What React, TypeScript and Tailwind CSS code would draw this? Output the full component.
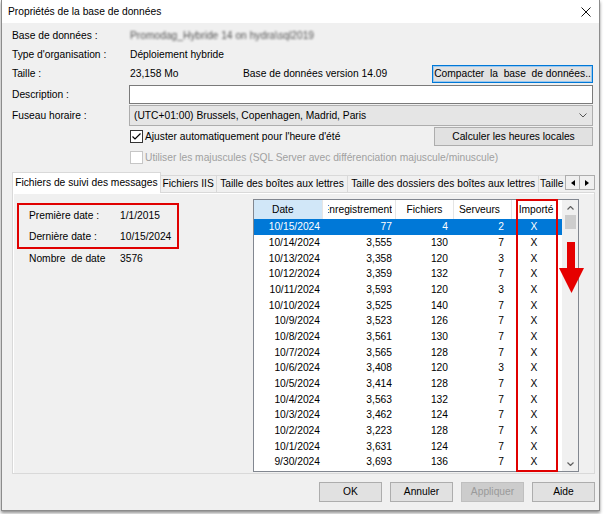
import React from "react";

const rows = [
  ["10/15/2024", "77", "4", "2"],
  ["10/14/2024", "3,555", "130", "7"],
  ["10/13/2024", "3,358", "120", "3"],
  ["10/12/2024", "3,359", "132", "7"],
  ["10/11/2024", "3,593", "120", "3"],
  ["10/10/2024", "3,525", "140", "7"],
  ["10/9/2024", "3,523", "126", "7"],
  ["10/8/2024", "3,561", "130", "7"],
  ["10/7/2024", "3,565", "128", "7"],
  ["10/6/2024", "3,408", "120", "3"],
  ["10/5/2024", "3,414", "128", "7"],
  ["10/4/2024", "3,563", "132", "7"],
  ["10/3/2024", "3,462", "124", "7"],
  ["10/2/2024", "3,223", "128", "7"],
  ["10/1/2024", "3,631", "124", "7"],
  ["9/30/2024", "3,693", "136", "7"],
];

const tabs = [
  { label: "Fichiers IIS", w: "w-[56px]" },
  { label: "Taille des boîtes aux lettres", w: "w-[132px]" },
  { label: "Taille des dossiers des boîtes aux lettres", w: "w-[191px]" },
];

const Check = ({ checked, disabled }: { checked?: boolean; disabled?: boolean }) => (
  <div className={`w-[13px] h-[13px] bg-white border ${disabled ? "border-[#c6c6c6]" : "border-[#333]"} flex items-center justify-center`}>
    {checked && (
      <svg width="11" height="11" viewBox="0 0 11 11">
        <polyline points="1.5,5.5 4,8 9.5,2.5" fill="none" stroke="#000" strokeWidth="1.2" />
      </svg>
    )}
  </div>
);

const Btn = ({ label, disabled }: { label: string; disabled?: boolean }) => (
  <div
    className={`w-[63px] h-[20px] flex items-center justify-center border ${
      disabled ? "bg-[#cccccc] border-[#bfbfbf] text-[#9a9a9a]" : "bg-[#e1e1e1] border-[#adadad]"
    }`}
  >
    {label}
  </div>
);

const App = () => {
  return (
    <div className="w-[605px] h-[514px] bg-white font-['Liberation_Sans',Arial,sans-serif] text-[10.25px] text-black overflow-hidden">
      <div className="ml-[1px] w-[599px] h-[511px] border-l border-r border-b border-[#8c8c8c] bg-[#f0f0f0] flex flex-col shadow-[0_2px_3px_rgba(0,0,0,0.45)]">
        {/* title bar */}
        <div className="h-[23px] bg-white flex items-center justify-between pl-[6px] pr-[8px]">
          <span>Propriétés de la base de données</span>
          <svg width="10" height="10" viewBox="0 0 10 10">
            <path d="M0.5 0.5 L9.5 9.5 M9.5 0.5 L0.5 9.5" stroke="#111" strokeWidth="1" />
          </svg>
        </div>

        <div className="flex flex-col pl-[10px] pr-[4px]">
          <div className="mt-[4px] h-[18px] flex items-center">
            <div className="w-[117px]">Base de données :</div>
            <div className="pl-[1px] text-[#555] blur-[1.3px] whitespace-nowrap">Promodag_Hybride 14 on hydra\sql2019</div>
          </div>
          <div className="h-[19px] flex items-center">
            <div className="w-[117px]">Type d'organisation :</div>
            <div className="pl-[1px]">Déploiement hybride</div>
          </div>
          <div className="h-[20px] flex items-center">
            <div className="w-[117px]">Taille :</div>
            <div className="pl-[1px] w-[114px]">23,158 Mo</div>
            <div className="flex-1">Base de données version 14.09</div>
            <div className="mr-[2px] w-[161px] h-[18px] flex items-center justify-center bg-[#e1e1e1] border border-[#0078d7] shadow-[inset_0_0_0_1px_#9cc8ee] whitespace-pre">
              Compacter  la  base  de données..
            </div>
          </div>
          <div className="h-[21px] flex items-center">
            <div className="w-[117px]">Description :</div>
            <div className="flex-1 mr-[2px] h-[19px] bg-white border border-[#7a7a7a]" />
          </div>
          <div className="h-[21px] flex items-center">
            <div className="w-[117px]">Fuseau horaire :</div>
            <div className="flex-1 mr-[2px] h-[21px] bg-[#e5e5e5] border border-[#adadad] flex items-center justify-between pl-[4px] pr-[5px]">
              <span>(UTC+01:00) Brussels, Copenhagen, Madrid, Paris</span>
              <svg width="8" height="5" viewBox="0 0 8 5">
                <polyline points="0.5,0.5 4,4 7.5,0.5" fill="none" stroke="#555" strokeWidth="1" />
              </svg>
            </div>
          </div>
          <div className="h-[21px] flex items-center">
            <div className="w-[118px]" />
            <Check checked />
            <div className="ml-[2px] flex-1">Ajuster automatiquement pour l'heure d'été</div>
            <div className="mr-[2px] w-[159px] h-[19px] flex items-center justify-center bg-[#e1e1e1] border border-[#adadad]">
              Calculer les heures locales
            </div>
          </div>
          <div className="h-[21px] flex items-center">
            <div className="w-[118px]" />
            <Check disabled />
            <div className="ml-[2px] text-[#a0a0a0]">Utiliser les majuscules (SQL Server avec différenciation majuscule/minuscule)</div>
          </div>

          {/* tabs */}
          <div className="mt-[4px] h-[21px] flex items-start relative z-10">
            <div className="w-[149px] h-[21px] bg-white border-l border-t border-r border-[#d9d9d9] flex items-center justify-center whitespace-nowrap">
              Fichiers de suivi des messages
            </div>
            {tabs.map((t) => (
              <div
                key={t.label}
                className={`${t.w} mt-[3px] h-[17px] border-t border-r border-[#d9d9d9] flex items-center justify-center whitespace-nowrap`}
              >
                {t.label}
              </div>
            ))}
            <div className="w-[26px] mt-[3px] h-[17px] border-t border-[#d9d9d9] whitespace-nowrap flex items-center pl-[1px]">
              Taille
            </div>
            <div className="mt-[3px] flex">
              <div className="w-[15px] h-[15px] border border-[#adadad] bg-[#f0f0f0] flex items-center justify-center">
                <svg width="4" height="6" viewBox="0 0 4 6"><polygon points="4,0 4,6 0,3" fill="#000" /></svg>
              </div>
              <div className="w-[15px] h-[15px] border border-l-0 border-[#adadad] bg-[#f0f0f0] flex items-center justify-center">
                <svg width="4" height="6" viewBox="0 0 4 6"><polygon points="0,0 0,6 4,3" fill="#000" /></svg>
              </div>
            </div>
          </div>

          {/* tab panel */}
          <div className="-mt-[1px] h-[282px] border border-[#d9d9d9] shadow-[inset_1px_1px_0_#fff] flex relative">
            <div className="w-[240px] flex flex-col">
              <div className="ml-[4px] mt-[10px] w-[162px] h-[46px] border-2 border-[#e00000] flex flex-col pl-[10px]">
                <div className="h-[21px] flex items-center">
                  <div className="w-[91px]">Première date :</div>
                  <div>1/1/2015</div>
                </div>
                <div className="h-[21px] flex items-center">
                  <div className="w-[91px]">Dernière date :</div>
                  <div>10/15/2024</div>
                </div>
              </div>
              <div className="h-[20px] flex items-center pl-[16px]">
                <div className="w-[91px] whitespace-pre">Nombre  de date</div>
                <div>3576</div>
              </div>
            </div>

            <div className="mt-[6px] w-[326px] h-[273px] border border-[#828790] bg-white flex relative">
              <div className="w-[308px] flex flex-col overflow-hidden">
                <div className="h-[19px] flex shrink-0">
                  <div className="w-[69px] bg-[#d1e7f8] border-r border-[#e5e5e5] flex items-center pl-[18px]">Date</div>
                  <div className="w-[73px] border-r border-[#e5e5e5] flex items-center justify-end pr-[3px]">
                    <div className="w-[64px] overflow-hidden whitespace-nowrap flex justify-end">Enregistrement</div>
                  </div>
                  <div className="w-[58px] border-r border-[#e5e5e5] flex items-center justify-center">Fichiers</div>
                  <div className="w-[58px] border-r border-[#e5e5e5] flex items-center justify-center pr-[6px]">Serveurs</div>
                  <div className="w-[50px] flex items-center justify-center pr-[2px]">Importé</div>
                </div>
                {rows.map((r, i) => (
                  <div
                    key={r[0]}
                    className={`h-[15.7px] shrink-0 flex items-center ${i === 0 ? "bg-[#0078d7] text-white" : ""}`}
                  >
                    <div className="w-[69px] text-right pr-[3px]">{r[0]}</div>
                    <div className="w-[73px] text-right pr-[4px]">{r[1]}</div>
                    <div className="w-[58px] text-right pr-[6px]">{r[2]}</div>
                    <div className="w-[58px] text-right pr-[8px]">{r[3]}</div>
                    <div className="w-[50px] text-center pr-[6px]">X</div>
                  </div>
                ))}
              </div>
              {/* scrollbar */}
              <div className="w-[16px] bg-[#f0f0f0] flex flex-col items-center">
                <div className="h-[15px] flex items-center justify-center">
                  <svg width="7" height="4" viewBox="0 0 7 4">
                    <polyline points="0.5,3.5 3.5,0.5 6.5,3.5" fill="none" stroke="#606060" strokeWidth="1.2" />
                  </svg>
                </div>
                <div className="w-[11px] h-[14px] bg-[#cdcdcd]" />
                <div className="flex-1" />
                <div className="h-[15px] flex items-center justify-center">
                  <svg width="7" height="4" viewBox="0 0 7 4">
                    <polyline points="0.5,0.5 3.5,3.5 6.5,0.5" fill="none" stroke="#606060" strokeWidth="1.2" />
                  </svg>
                </div>
              </div>
              {/* annotation box */}
              <div className="absolute left-[262px] top-[-1px] w-[42px] h-[273px] border-2 border-[#e00000]" />
            </div>

            {/* annotation arrow */}
            <svg className="absolute left-[546px] top-[49px]" width="26" height="51" viewBox="0 0 26 51">
              <polygon points="8,0 16,0 16,26 25,26 12.5,51 0,26 8,26" fill="#e60000" />
            </svg>
          </div>

          {/* bottom buttons */}
          <div className="mt-[8px] flex justify-end gap-[8px]">
            <Btn label="OK" />
            <Btn label="Annuler" />
            <Btn label="Appliquer" disabled />
            <Btn label="Aide" />
          </div>
        </div>
      </div>
    </div>
  );
};

export default App;
